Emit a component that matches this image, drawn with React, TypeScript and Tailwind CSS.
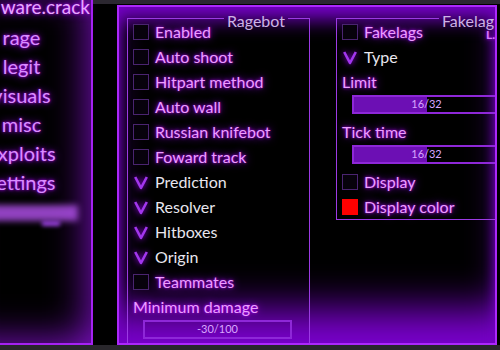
import React from "react";

const glow = "[text-shadow:0_0_3px_#b400ff,0_0_8px_#9000e0]";
const line = "bg-[#9c3ae4]";

function Sidebar() {
  const items = ["rage", "legit", "visuals", "misc", "exploits", "settings"];
  return (
    <aside className="-ml-[50px] -mt-[20px] flex h-[361px] w-[143px] shrink-0 flex-col items-center border-2 border-[#a522f2] bg-black pt-[10px] shadow-[inset_0_0_40px_#8a10d8]">
      <div className={`self-end pr-[1px] text-[19px] leading-[22px] text-[#e7a6ff] ${glow}`}>ware.crack</div>
      <nav className="mt-[5px] flex flex-col items-center">
        {items.map((item) => (
          <div key={item} className={`text-[20px] leading-[29px] text-[#d98cff] ${glow}`}>
            {item}
          </div>
        ))}
      </nav>
      <div className="mt-[8px] h-[16px] w-[126px] self-start bg-[#b552f0] opacity-80 blur-[3px]" />
      <div className="ml-[90px] h-[5px] w-[18px] self-start bg-[#9a40e0] blur-[2px]" />
    </aside>
  );
}

function Group({ title, children, extra }: { title: string; children: React.ReactNode; extra?: React.ReactNode }) {
  return (
    <div className="relative flex w-[183px] shrink-0 flex-col border-x border-b border-[#9c3ae4]">
      <div className="-mx-px flex h-px items-center">
        <div className={`h-px flex-1 ${line}`} />
        <span className="relative top-[2px] px-[3px] text-[16px] leading-[20px] text-[#cdb2e6]">{title}</span>
        <div className={`h-px w-[22px] ${line}`} />
      </div>
      {extra}
      <div className="flex flex-col pl-[5px]">{children}</div>
    </div>
  );
}

function Check({ label, red = false }: { label: string; red?: boolean }) {
  return (
    <div className="flex h-[25px] items-center">
      <div
        className={`h-[16px] w-[16px] shrink-0 border ${
          red ? "border-[#ff0000] bg-[#ff0000]" : "border-[#4a2470] bg-[#07020c]"
        }`}
      />
      <span className={`ml-[6px] whitespace-nowrap text-[16px] text-[#eb9dff] ${glow}`}>{label}</span>
    </div>
  );
}

function Combo({ label }: { label: string }) {
  return (
    <div className="flex h-[25px] items-center">
      <svg width="16" height="16" viewBox="0 0 16 16" className="shrink-0 drop-shadow-[0_0_3px_#a000ff]">
        <path d="M2.2 3 L8 14 L13.8 3" stroke="#a236ee" strokeWidth="2.6" fill="none" strokeLinejoin="round" />
      </svg>
      <span className="ml-[6px] whitespace-nowrap text-[16px] text-[#e8e6ee]">{label}</span>
    </div>
  );
}

function Label({ label }: { label: string }) {
  return (
    <div className={`flex h-[25px] items-center whitespace-nowrap text-[16px] text-[#eb9dff] ${glow}`}>{label}</div>
  );
}

function Slider({ value, pct }: { value: string; pct: number }) {
  return (
    <div className="flex h-[25px] items-center pl-[10px]">
      <div className="relative mb-[4px] h-[19px] w-[149px] shrink-0 border-2 border-[#8e27d8]">
        <div className="h-full bg-[#6c0fb4]" style={{ width: `${pct}%` }} />
        <span className="absolute inset-0 flex items-center justify-center text-[11px] text-[#d9a6ff]">{value}</span>
      </div>
    </div>
  );
}

function MainPanel() {
  return (
    <main className="ml-[24px] mt-[1px] flex h-[340px] w-[380px] shrink-0 items-start gap-[26px] overflow-hidden border-2 border-[#ac28fb] bg-black pl-[8px] pt-[11px] shadow-[inset_0_0_12px_#7400c4,inset_0_22px_18px_-8px_#6a00b4,inset_0_-48px_40px_-14px_#7a00cc]">
      <Group title="Ragebot">
        <Check label="Enabled" />
        <Check label="Auto shoot" />
        <Check label="Hitpart method" />
        <Check label="Auto wall" />
        <Check label="Russian knifebot" />
        <Check label="Foward track" />
        <Combo label="Prediction" />
        <Combo label="Resolver" />
        <Combo label="Hitboxes" />
        <Combo label="Origin" />
        <Check label="Teammates" />
        <Label label="Minimum damage" />
        <Slider value="-30/100" pct={0} />
      </Group>
      <Group
        title="Fakelag"
        extra={
          <span className={`absolute left-[149px] top-[10px] text-[12px] font-bold leading-[14px] text-[#d878ff] ${glow}`}>
            L...
          </span>
        }
      >
        <Check label="Fakelags" />
        <Combo label="Type" />
        <Label label="Limit" />
        <Slider value="16/32" pct={50} />
        <Label label="Tick time" />
        <Slider value="16/32" pct={50} />
        <Check label="Display" />
        <Check label="Display color" red />
      </Group>
    </main>
  );
}

export default function App() {
  return (
    <div className="relative h-[350px] w-[500px] overflow-hidden bg-black font-[Lato,sans-serif]">
      <div className="h-[4px] bg-[#2b2730]" />
      <div className="flex h-[341px] items-start">
        <Sidebar />
        <MainPanel />
      </div>
      <div className="h-[5px] bg-[#29272c]" />
    </div>
  );
}
